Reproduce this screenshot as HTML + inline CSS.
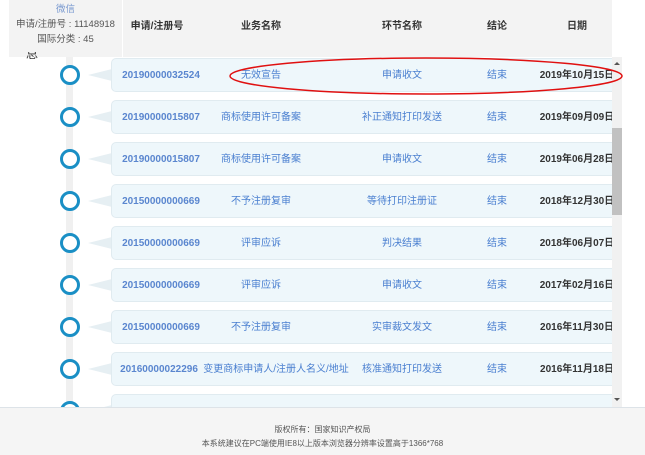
<!DOCTYPE html><html><head><meta charset="utf-8"><style>
body{margin:0;width:645px;height:455px;overflow:hidden;background:#fff;font-family:"Liberation Sans","Noto Sans CJK SC",sans-serif;position:relative}
.hdr{position:absolute;left:120px;top:0;width:492px;height:57px;background:#f3f3f3}
.pop{position:absolute;left:9px;top:0;width:114px;height:57px;background:#f3f3f3;border-right:1px solid #fff;font-size:9.5px;color:#555;text-align:center;line-height:15px;padding-top:2px;box-sizing:border-box}
.h{position:absolute;top:17px;font-size:10px;font-weight:bold;color:#333;transform:translateX(-50%);white-space:nowrap}
.vline{position:absolute;left:66px;top:57px;width:7px;height:350px;background:#f0f0f0}
.circ{position:absolute;left:60px;width:14px;height:14px;border:3px solid #1a8fc5;border-radius:50%;background:#fff}
.card{position:absolute;left:111px;width:510px;height:34px;background:#eef7fb;border:1px solid #e0ebf0;border-radius:5px;box-sizing:border-box}
.tri{position:absolute;left:88px;width:0;height:0;border-top:6px solid transparent;border-bottom:6px solid transparent;border-right:24px solid #e6eff3}
.t{position:absolute;font-size:10px;color:#4a7fd0;transform:translateX(-50%);white-space:nowrap;line-height:12px}
.n{font-weight:bold;color:#5a86cf}
.d{color:#333;font-weight:bold}
.sb{position:absolute;left:612px;top:57px;width:10px;height:350px;background:#f1f1f1}
.foot{position:absolute;left:0;top:407px;width:645px;height:48px;background:#f5f5f5;border-top:1px solid #dde3e8;font-size:8px;color:#555;text-align:center;line-height:14px;padding-top:15px;box-sizing:border-box}
</style></head><body>
<div class="hdr"></div>
<div class="pop"><span style="color:#7a9ad0">微信</span><br>申请/注册号 : 11148918<br>国际分类 : 45</div>
<div class="h" style="left:157px">申请/注册号</div>
<div class="h" style="left:261px">业务名称</div>
<div class="h" style="left:402px">环节名称</div>
<div class="h" style="left:497px">结论</div>
<div class="h" style="left:577px">日期</div>
<div style="position:absolute;left:26px;top:52px;font-size:12px;color:#333;height:8px;overflow:hidden;line-height:4px">总</div>
<div class="vline"></div>
<div id="rows"></div>
<div class="sb"><div style="position:absolute;left:0;top:71px;width:10px;height:87px;background:#c1c1c1"></div><div style="position:absolute;left:2px;top:5px;border-left:3px solid transparent;border-right:3px solid transparent;border-bottom:3px solid #555"></div><div style="position:absolute;left:2px;top:341px;border-left:3px solid transparent;border-right:3px solid transparent;border-top:3px solid #555"></div></div>
<svg style="position:absolute;left:0;top:0" width="645" height="455"><ellipse cx="426" cy="76" rx="196" ry="18" fill="none" stroke="#e01010" stroke-width="1.5"/></svg>
<div class="foot">版权所有：国家知识产权局<br>本系统建议在PC端使用IE8以上版本浏览器分辨率设置高于1366*768</div>
<script>
var r=[["20190000032524","无效宣告","申请收文","结束","2019年10月15日"],["20190000015807","商标使用许可备案","补正通知打印发送","结束","2019年09月09日"],["20190000015807","商标使用许可备案","申请收文","结束","2019年06月28日"],["20150000000669","不予注册复审","等待打印注册证","结束","2018年12月30日"],["20150000000669","评审应诉","判决结果","结束","2018年06月07日"],["20150000000669","评审应诉","申请收文","结束","2017年02月16日"],["20150000000669","不予注册复审","实审裁文发文","结束","2016年11月30日"],["20160000022296","变更商标申请人/注册人名义/地址","核准通知打印发送","结束","2016年11月18日"],["","","","",""]];
var h="";r.forEach(function(a,i){var c=75+42*i;
h+='<div class="tri" style="top:'+(c-6)+'px"></div><div class="card" style="top:'+(c-17)+'px"></div><div class="circ" style="top:'+(c-10)+'px"></div>';
var xs=[161,261,402,497,577];a.forEach(function(s,j){h+='<div class="t'+(j==4?' d':'')+(j==0?' n':'')+'" style="left:'+(j==1&&i==7?276:(j==0&&i==7?159:xs[j]))+'px;top:'+(c-5)+'px">'+s+'</div>'});});
document.getElementById("rows").innerHTML=h;
</script>
</body></html>
